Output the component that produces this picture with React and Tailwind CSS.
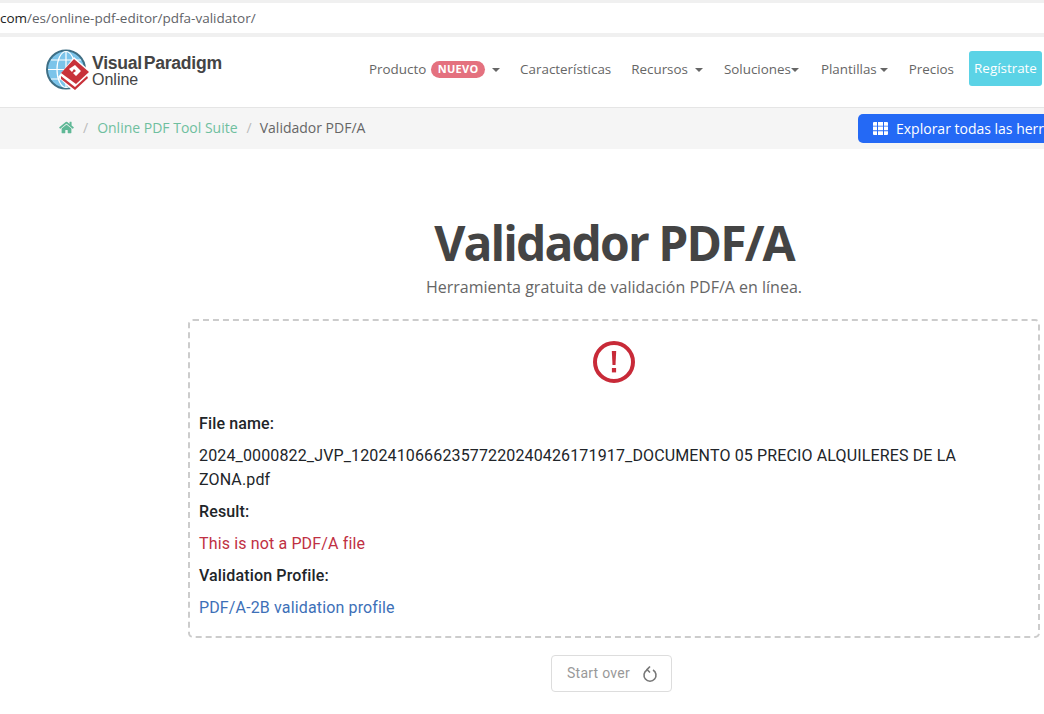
function Caret({ className = "" }) {
    return <span className={`inline-block w-0 h-0 border-x-[4px] border-x-transparent border-t-[4px] border-t-[#666] ${className}`} />;
}

function Logo() {
    return (
        <div className="flex items-center mb-[3px]">
            <svg width="44" height="44" viewBox="0 0 44 44" className="shrink-0">
                <circle cx="20" cy="20.5" r="19" fill="#7cc4ea" stroke="#3f6f85" strokeWidth="2" />
                <g stroke="#ffffff" strokeWidth="1.2" fill="none">
                    <ellipse cx="20" cy="20.5" rx="9" ry="18" />
                    <path d="M20 2.5v36M2 20.5h36M5 11h30M5 30h30" />
                </g>
                <path d="M28 8 L44 22 L29 44 L12 28 Z" fill="#ffffff" />
                <path d="M28 10 L43 23 L30 35 L15 24 Z" fill="#c8323a" />
                <path d="M15 27 L29 38 L41 27 L42 29 L29 41 L15 30 Z" fill="#c8323a" />
                <path d="M23 20 L29 16 L35 22 L30 27 L27 24 L30 22 L28 20 L26 23 Z" fill="#ffffff" />
            </svg>
            <div className="ml-[2px] pt-[2px] font-['Liberation_Sans',sans-serif] text-[#444]">
                <div className="font-bold text-[17.6px] leading-[17px] tracking-[-0.25px] [word-spacing:-3px] whitespace-nowrap">Visual Paradigm</div>
                <div className="text-[16px] leading-[16px]">Online</div>
            </div>
        </div>
    );
}

export default function App() {
    return (
        <div className="w-[1044px] h-[714px] overflow-hidden bg-white flex flex-col font-['Open_Sans',sans-serif]">
            <div className="h-[3px] bg-[#f0f0f0] shrink-0" />
            <div className="h-[30px] shrink-0 bg-white flex items-center text-[13.5px] text-[#5f6368] whitespace-nowrap">
                <span className="text-[#222]">com</span>/es/online-pdf-editor/pdfa-validator/
            </div>
            <div className="h-[4px] bg-[#f0f0f0] shrink-0" />

            <header className="h-[71px] shrink-0 flex items-center justify-between pl-[46px] pr-[2px] border-b border-[#e5e5e5] text-[13.4px] text-[#666]">
                <Logo />
                <nav className="flex items-center whitespace-nowrap mb-[5px]">
                    <span>Producto</span>
                    <span className="ml-[5px] h-[17px] px-[6.5px] rounded-full bg-[#e4717f] text-white text-[11px] font-bold flex items-center tracking-[0.3px]">NUEVO</span>
                    <Caret className="ml-[7px]" />
                    <span className="ml-[20px]">Características</span>
                    <span className="ml-[20px]">Recursos</span>
                    <Caret className="ml-[7px]" />
                    <span className="ml-[21px]">Soluciones</span>
                    <Caret />
                    <span className="ml-[22px]">Plantillas</span>
                    <Caret className="ml-[3px]" />
                    <span className="ml-[21px]">Precios</span>
                    <span className="ml-[15px] mb-[2px] h-[35px] w-[73px] rounded-[3px] bg-[#5bd3e6] text-white flex items-center justify-center">Regístrate</span>
                </nav>
            </header>

            <div className="h-[41px] shrink-0 bg-[#f5f5f5] flex items-center justify-between pl-[59px] text-[14px] relative">
                <div className="flex items-center whitespace-nowrap mb-[2px]">
                    <svg width="15" height="13" viewBox="0 0 576 512" fill="#5fb896"><path d="M280 148 96 300v164a16 16 0 0 0 16 16l112-.3a16 16 0 0 0 16-16V368a16 16 0 0 1 16-16h64a16 16 0 0 1 16 16v95.6a16 16 0 0 0 16 16l112 .4a16 16 0 0 0 16-16V300L296 148a12 12 0 0 0-16 0zM572 251l-84-69V44a12 12 0 0 0-12-12h-56a12 12 0 0 0-12 12v72l-89-74a48 48 0 0 0-61 0L4 251a12 12 0 0 0-2 17l26 31a12 12 0 0 0 17 2L280 107a12 12 0 0 1 16 0l235 194a12 12 0 0 0 17-2l26-31a12 12 0 0 0-2-17z" /></svg>
                    <span className="mx-[9px] text-[#bbb]">/</span>
                    <span className="text-[#6fbf9f]">Online PDF Tool Suite</span>
                    <span className="ml-[9px] mr-[8px] text-[#bbb]">/</span>
                    <span className="text-[#666]">Validador PDF/A</span>
                </div>
                <button className="shrink-0 h-[29px] w-[240px] -mr-[54px] mb-[1px] rounded-[5px] bg-[#2469f5] text-white flex items-center pl-[15px] whitespace-nowrap overflow-hidden">
                    <svg width="15" height="13" viewBox="0 0 15 13" fill="#fff" className="shrink-0 mr-[8px]">
                        <path d="M0 1a1 1 0 0 1 1-1h3v3.7H0zM5 0h5v3.7H5zM11 0h3a1 1 0 0 1 1 1v2.7h-4zM0 4.6h4v3.7H0zM5 4.6h5v3.7H5zM11 4.6h4v3.7h-4zM0 9.3h4V13H1a1 1 0 0 1-1-1zM5 9.3h5V13H5zM11 9.3h4V12a1 1 0 0 1-1 1h-3z" />
                    </svg>
                    Explorar todas las herramientas
                </button>
            </div>

            <main className="pl-[188px] pr-[4px]">
                <h1 className="mt-[60px] text-center text-[48px] leading-[68px] font-bold tracking-[-1.9px] text-[#444]">Validador PDF/A</h1>
                <p className="-mt-[2px] text-center text-[16px] leading-[24px] text-[#666]">Herramienta gratuita de validación PDF/A en línea.</p>

                <section className="mt-[20px] h-[319px] border-2 border-dashed border-[#ccc] rounded-[5px] px-[9px] font-['Roboto',sans-serif] text-[16px] leading-[24px] tracking-[0.14px] text-[#212529]">
                    <div className="flex justify-center pt-[20px] pb-[29px]">
                        <svg width="42" height="42" viewBox="0 0 42 42">
                            <circle cx="21" cy="21" r="19" fill="none" stroke="#c82a38" strokeWidth="4" />
                            <path d="M18.8 10h4.4l-.7 14h-3z" fill="#c82a38" />
                            <rect x="18.9" y="27" width="4.2" height="4.4" fill="#c82a38" />
                        </svg>
                    </div>
                    <p className="font-medium mb-[8px]">File name:</p>
                    <p className="mb-[8px]">2024_0000822_JVP_120241066623577220240426171917_DOCUMENTO 05 PRECIO ALQUILERES DE LA ZONA.pdf</p>
                    <p className="font-medium mb-[8px]">Result:</p>
                    <p className="mb-[8px] text-[#c03043]">This is not a PDF/A file</p>
                    <p className="font-medium mb-[8px]">Validation Profile:</p>
                    <p className="text-[#3d70b8]">PDF/A-2B validation profile</p>
                </section>

                <div className="mt-[17px] pr-[5px] flex justify-center font-['Roboto',sans-serif]">
                    <button className="w-[121px] h-[37px] border border-[#ddd] rounded-[4px] flex items-center pl-[15px] text-[14px] tracking-[0.25px] text-[#999]">
                        <span className="-mt-[1px]">Start over</span>
                        <svg width="16" height="18" viewBox="0 0 16 18" fill="none" stroke="#777" strokeWidth="1.6" className="ml-[12px]">
                            <path d="M5 5a6 6 0 1 0 6 0" />
                            <path d="M8 1.5 5 4.6 8 7.5" />
                        </svg>
                    </button>
                </div>
            </main>
        </div>
    );
}
